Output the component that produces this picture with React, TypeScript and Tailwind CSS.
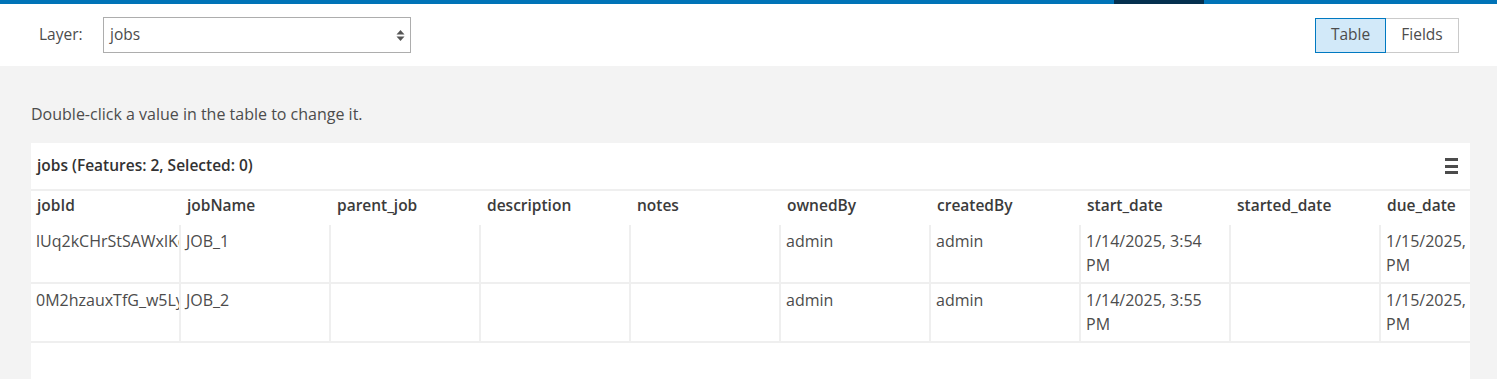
const columns = [
  'jobId',
  'jobName',
  'parent_job',
  'description',
  'notes',
  'ownedBy',
  'createdBy',
  'start_date',
  'started_date',
  'due_date',
]

const rows = [
  ['lUq2kCHrStSAWxlKqZ3n', 'JOB_1', '', '', '', 'admin', 'admin', '1/14/2025, 3:54 PM', '', '1/15/2025, 3:54 PM'],
  ['0M2hzauxTfG_w5LyQ8pR', 'JOB_2', '', '', '', 'admin', 'admin', '1/14/2025, 3:55 PM', '', '1/15/2025, 3:55 PM'],
]

export default function App() {
  return (
    <div className="min-h-screen bg-[#f3f3f3] text-[#4c4c4c] font-['Open_Sans',sans-serif]">
      {/* top accent bar */}
      <div className="flex h-1 bg-[#0073b7]">
        <div className="w-[1114px]" />
        <div className="w-[90px] bg-[#05304f]" />
      </div>

      {/* toolbar */}
      <div className="flex h-[62px] items-center justify-between bg-white pl-[39px] pr-[38px]">
        <div className="flex items-center">
          <span className="w-[64px] text-[15.5px]">Layer:</span>
          <div className="flex h-[36px] w-[308px] items-center justify-between border border-[#adadad] pl-[6px] pr-[5px] text-[15.5px]">
            <span>jobs</span>
            <svg width="9" height="13" viewBox="0 0 9 13" className="text-[#555]">
              <path d="M4.5 1 L8.5 5.5 L0.5 5.5 Z" fill="currentColor" />
              <path d="M4.5 12 L8.5 7.5 L0.5 7.5 Z" fill="currentColor" />
            </svg>
          </div>
        </div>
        <div className="flex h-[35px] text-[15.5px]">
          <div className="flex w-[71px] items-center justify-center border border-[#0079c1] bg-[#d2e9f9]">Table</div>
          <div className="flex w-[73px] items-center justify-center border border-l-0 border-[#cacaca] bg-white">Fields</div>
        </div>
      </div>

      <div className="px-[31px] pr-[27px]">
        <p className="pt-[36px] pb-[17px] text-[16px] leading-6">Double-click a value in the table to change it.</p>

        <div className="bg-white">
          <div className="flex h-[48px] items-center justify-between border-b-2 border-[#efefef] pl-[6px] pr-[12px]">
            <span className="text-[15.5px] font-semibold text-[#323232]">jobs (Features: 2, Selected: 0)</span>
            <div className="flex flex-col gap-[3.5px]">
              <div className="h-[3px] w-[13px] bg-[#4c4c4c]" />
              <div className="h-[3px] w-[13px] bg-[#4c4c4c]" />
              <div className="h-[3px] w-[13px] bg-[#4c4c4c]" />
            </div>
          </div>

          <div className="overflow-hidden">
            <div className="flex h-[34px] items-center pb-[4px]">
              {columns.map((c) => (
                <div key={c} className="w-[150px] shrink-0 pl-[6px] text-[15.5px] font-semibold text-[#3b3b3b]">
                  {c}
                </div>
              ))}
            </div>
            {rows.map((r, i) => (
              <div key={i} className="flex h-[59px] border-b-2 border-[#efefef]">
                {r.map((v, j) => (
                  <div
                    key={j}
                    className="w-[150px] shrink-0 overflow-hidden border-r-2 border-[#efefef] px-[5px] pt-[4px] text-[16px] leading-6 text-[#4c4c4c]"
                  >
                    <div className={j === 0 ? 'whitespace-nowrap' : ''}>{v}</div>
                  </div>
                ))}
              </div>
            ))}
            <div className="h-[40px]" />
          </div>
        </div>
      </div>
    </div>
  )
}
